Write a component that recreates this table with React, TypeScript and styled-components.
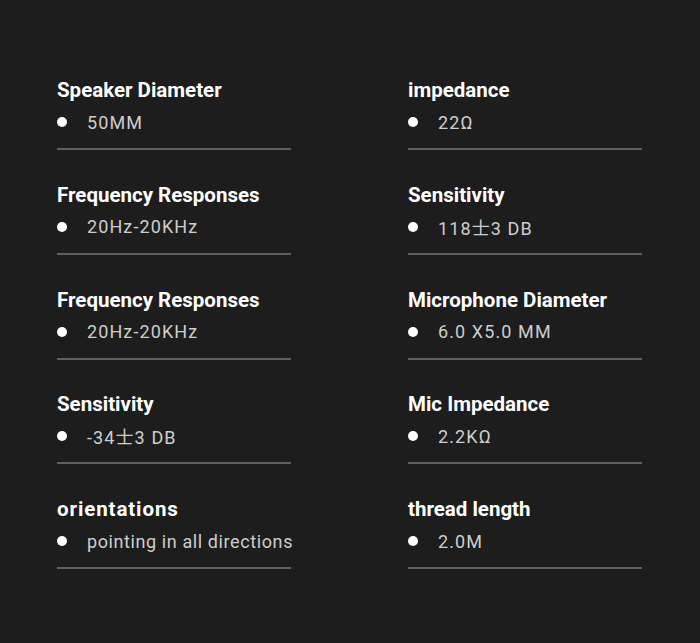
import React from "react";
import styled, { createGlobalStyle } from "styled-components";

const GlobalStyle = createGlobalStyle`
  html, body {
    margin: 0;
    padding: 0;
    background: #1d1d1d;
  }
  body {
    font-family: Roboto, "Noto Sans CJK SC", sans-serif;
  }
`;

const Page = styled.div`
  width: 700px;
  height: 643px;
  background: #1d1d1d;
  box-sizing: border-box;
  padding: 78px 0 0 57px;
`;

const Grid = styled.div`
  display: grid;
  grid-template-columns: 234px 234px;
  column-gap: 117px;
  row-gap: 32.75px;
`;

const Item = styled.div`
  display: flex;
  flex-direction: column;
  border-bottom: 2px solid #5e5e5e;
  padding-bottom: 12px;
`;

const Title = styled.div<{ $spaced?: boolean }>`
  color: #ffffff;
  font-weight: 700;
  font-size: 20.5px;
  line-height: 24px;
  letter-spacing: ${(p) => (p.$spaced ? "0.9px" : "0")};
  white-space: nowrap;
`;

const ValueRow = styled.div`
  display: flex;
  align-items: center;
  gap: 20px;
  height: 28px;
  margin-top: 6px;
`;

const Dot = styled.span`
  width: 10px;
  height: 10px;
  border-radius: 50%;
  background: #ffffff;
  flex: none;
`;

const Value = styled.span<{ $spaced?: boolean }>`
  color: #cdcdcd;
  font-size: 18px;
  letter-spacing: ${(p) => (p.$spaced ? "0.6px" : "1.1px")};
  font-family: Roboto, "Noto Sans CJK SC", sans-serif;
  white-space: nowrap;
`;

type Spec = { title: string; value: string; spaced?: boolean };

const specs: Spec[] = [
  { title: "Speaker Diameter", value: "50MM" },
  { title: "impedance", value: "22Ω" },
  { title: "Frequency Responses", value: "20Hz-20KHz" },
  { title: "Sensitivity", value: "118士3 DB" },
  { title: "Frequency Responses", value: "20Hz-20KHz" },
  { title: "Microphone Diameter", value: "6.0 X5.0 MM" },
  { title: "Sensitivity", value: "-34士3 DB" },
  { title: "Mic Impedance", value: "2.2KΩ" },
  { title: "orientations", value: "pointing in all directions", spaced: true },
  { title: "thread length", value: "2.0M" },
];

export default function App() {
  return (
    <>
      <GlobalStyle />
      <Page>
        <Grid>
          {specs.map((s, i) => (
            <Item key={i}>
              <Title $spaced={s.spaced}>{s.title}</Title>
              <ValueRow>
                <Dot />
                <Value $spaced={s.spaced}>{s.value}</Value>
              </ValueRow>
            </Item>
          ))}
        </Grid>
      </Page>
    </>
  );
}
